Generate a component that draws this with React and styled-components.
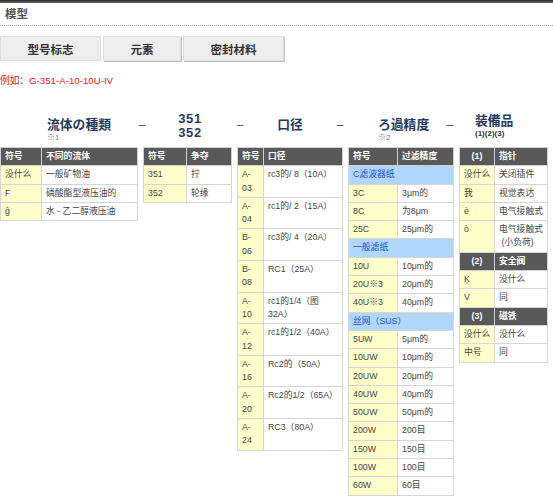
import React from 'react';
import styled, { createGlobalStyle } from 'styled-components';

const GlobalStyle = createGlobalStyle`
  body {
    margin: 0;
    background: #fff;
    font-family: "Liberation Sans", "Noto Sans CJK SC", sans-serif;
    color: #444;
  }
`;

const Page = styled.div`
  width: 553px;
`;

const TopBar = styled.div`
  height: 3px;
  background: linear-gradient(#2e2e2e, #6a6a6a);
`;

const Title = styled.h1`
  margin: 0;
  padding: 4px 5px 4px;
  font-size: 11.5px;
  line-height: 14px;
  font-weight: bold;
  color: #555;
  border-bottom: 1px dotted #999;
`;

const Tabs = styled.div`
  display: flex;
  gap: 2px;
  margin-top: 10px;
`;

const Tab = styled.div`
  width: ${p => p.$w}px;
  height: 25px;
  box-sizing: border-box;
  display: flex;
  align-items: center;
  justify-content: center;
  background: #eeeeee;
  border: 1px solid #dcdcdc;
  box-shadow: ${p => (p.$active ? 'none' : '1px 1px 0 #c4c4c4')};
  font-size: 11.5px;
  font-weight: bold;
  color: #333;
`;

const Example = styled.div`
  margin-top: 13px;
  font-size: 9.7px;
  line-height: 13px;
  color: #e02020;
`;

const HeadingRow = styled.div`
  display: flex;
  height: 36px;
  margin-top: 24px;
`;

const Heading = styled.div`
  flex: none;
  box-sizing: border-box;
  width: ${p => p.$w}px;
  padding-top: ${p => p.$top}px;
  padding-left: ${p => p.$left || 0}px;
  text-align: ${p => p.$align || 'left'};
  color: #2a3a5e;
`;

const HeadTitle = styled.div`
  font-size: 12.8px;
  line-height: 16px;
  font-weight: bold;
`;

const Numbers = styled.div`
  font-size: 13px;
  line-height: 13.5px;
  font-weight: bold;
  letter-spacing: 0.6px;
`;

const Note = styled.div`
  font-size: 8px;
  line-height: 10px;
  color: #6a7a96;
`;

const Parts = styled.div`
  font-size: 8px;
  line-height: 10px;
  font-weight: bold;
  color: #333;
`;

const Dash = styled.div`
  flex: none;
  width: ${p => p.$w}px;
  padding-top: 6px;
  text-align: center;
  font-size: 12px;
  line-height: 16px;
  color: #555;
`;

const Tables = styled.div`
  display: flex;
  align-items: flex-start;
  gap: 5px;
`;

const Table = styled.table`
  flex: none;
  width: ${p => p.$w}px;
  table-layout: fixed;
  border-collapse: collapse;
  border: 1px solid #c8c8c8;
  font-size: 8.8px;
  line-height: 13.3px;
`;

const Col = styled.col`
  width: ${p => (p.$w ? `${p.$w}px` : 'auto')};
`;

const Th = styled.th`
  background: #595959;
  color: #fff;
  font-weight: bold;
  text-align: ${p => (p.$center ? 'center' : 'left')};
  padding: 2px 4px;
  border: 1px solid #cfcfcf;
  vertical-align: top;
  white-space: nowrap;
`;

const Td = styled.td`
  padding: 2px 4px;
  border: 1px solid #d6d6d6;
  vertical-align: top;
  white-space: nowrap;
  color: #444;
  background: ${p => (p.$code ? '#ffffcc' : '#fff')};
`;

const Section = styled.td`
  padding: 2px 4px;
  border: 1px solid #d6d6d6;
  background: #b0d6fa;
  color: #2050d0;
  white-space: nowrap;
`;

const br = (a, b) => (
  <>
    {a}
    <br />
    {b}
  </>
);

const fluid = {
  w: 138,
  code: 41,
  rows: [
    { head: ['符号', '不同的流体'] },
    ['没什么', '一般矿物油'],
    ['F', '磷酸酯型液压油的'],
    ['ĝ', '水 - 乙二醇液压油'],
  ],
};

const series = {
  w: 89,
  code: 43,
  rows: [{ head: ['符号', '争夺'] }, ['351', '拧'], ['352', '轮缘']],
};

const port = {
  w: 106,
  code: 26,
  rows: [
    { head: ['符号', '口径'] },
    [br('A-', '03'), 'rc3的/ 8（10A）'],
    [br('A-', '04'), 'rc1的/ 2（15A）'],
    [br('B-', '06'), 'rc3的/ 4（20A）'],
    [br('B-', '08'), 'RC1（25A）'],
    [br('A-', '10'), br('rc1的1/4（图', '32A）')],
    [br('A-', '12'), 'rc1的1/2（40A）'],
    [br('A-', '16'), 'Rc2的（50A）'],
    [br('A-', '20'), 'Rc2的1/2（65A）'],
    [br('A-', '24'), 'RC3（80A）'],
  ],
};

const filter = {
  w: 106,
  code: 49,
  rows: [
    { head: ['符号', '过滤精度'] },
    { section: 'C滤波器纸' },
    ['3C', '3μm的'],
    ['8C', '为8μm'],
    ['25C', '25μm的'],
    { section: '一般滤纸' },
    ['10U', '10μm的'],
    ['20U※3', '20μm的'],
    ['40U※3', '40μm的'],
    { section: '丝网（SUS）' },
    ['5UW', '5μm的'],
    ['10UW', '10μm的'],
    ['20UW', '20μm的'],
    ['40UW', '40μm的'],
    ['50UW', '50μm的'],
    ['200W', '200目'],
    ['150W', '150目'],
    ['100W', '100目'],
    ['60W', '60目'],
  ],
};

const options = {
  w: 89,
  code: 35,
  rows: [
    { head: ['(1)', '指针'], center: true },
    ['没什么', '关闭插件'],
    ['我', '视觉表达'],
    ['è', '电气接触式'],
    ['ò', br('电气接触式', '\u00a0(小负荷)')],
    { head: ['(2)', '安全阀'], center: true },
    ['Ķ', '没什么'],
    ['V', '同'],
    { head: ['(3)', '磁铁'], center: true },
    ['没什么', '没什么'],
    ['中号', '同'],
  ],
};

function CodeTable({ data }) {
  return (
    <Table $w={data.w}>
      <colgroup>
        <Col $w={data.code} />
        <Col />
      </colgroup>
      <tbody>
        {data.rows.map((row, i) => {
          if (row.head)
            return (
              <tr key={i}>
                <Th $center={row.center}>{row.head[0]}</Th>
                <Th>{row.head[1]}</Th>
              </tr>
            );
          if (row.section)
            return (
              <tr key={i}>
                <Section colSpan={2}>{row.section}</Section>
              </tr>
            );
          return (
            <tr key={i}>
              <Td $code>{row[0]}</Td>
              <Td>{row[1]}</Td>
            </tr>
          );
        })}
      </tbody>
    </Table>
  );
}

export default function App() {
  return (
    <Page>
      <GlobalStyle />
      <TopBar />
      <Title>模型</Title>
      <Tabs>
        <Tab $w={101} $active>型号标志</Tab>
        <Tab $w={78}>元素</Tab>
        <Tab $w={101}>密封材料</Tab>
      </Tabs>
      <Example>例如：G-351-A-10-10U-IV</Example>

      <HeadingRow>
        <Heading $w={134} $top={6} $left={47}>
          <HeadTitle>流体の種類</HeadTitle>
          <Note>※1</Note>
        </Heading>
        <Dash $w={16}>–</Dash>
        <Heading $w={80} $top={1} $align="center">
          <Numbers>351</Numbers>
          <Numbers>352</Numbers>
        </Heading>
        <Dash $w={20}>–</Dash>
        <Heading $w={80} $top={6} $align="center">
          <HeadTitle>口径</HeadTitle>
        </Heading>
        <Dash $w={20}>–</Dash>
        <Heading $w={90} $top={6} $left={28}>
          <HeadTitle>ろ過精度</HeadTitle>
          <Note>※2</Note>
        </Heading>
        <Dash $w={20}>–</Dash>
        <Heading $w={80} $top={2} $left={15}>
          <HeadTitle>装備品</HeadTitle>
          <Parts>(1)(2)(3)</Parts>
        </Heading>
      </HeadingRow>

      <Tables>
        <CodeTable data={fluid} />
        <CodeTable data={series} />
        <CodeTable data={port} />
        <CodeTable data={filter} />
        <CodeTable data={options} />
      </Tables>
    </Page>
  );
}
